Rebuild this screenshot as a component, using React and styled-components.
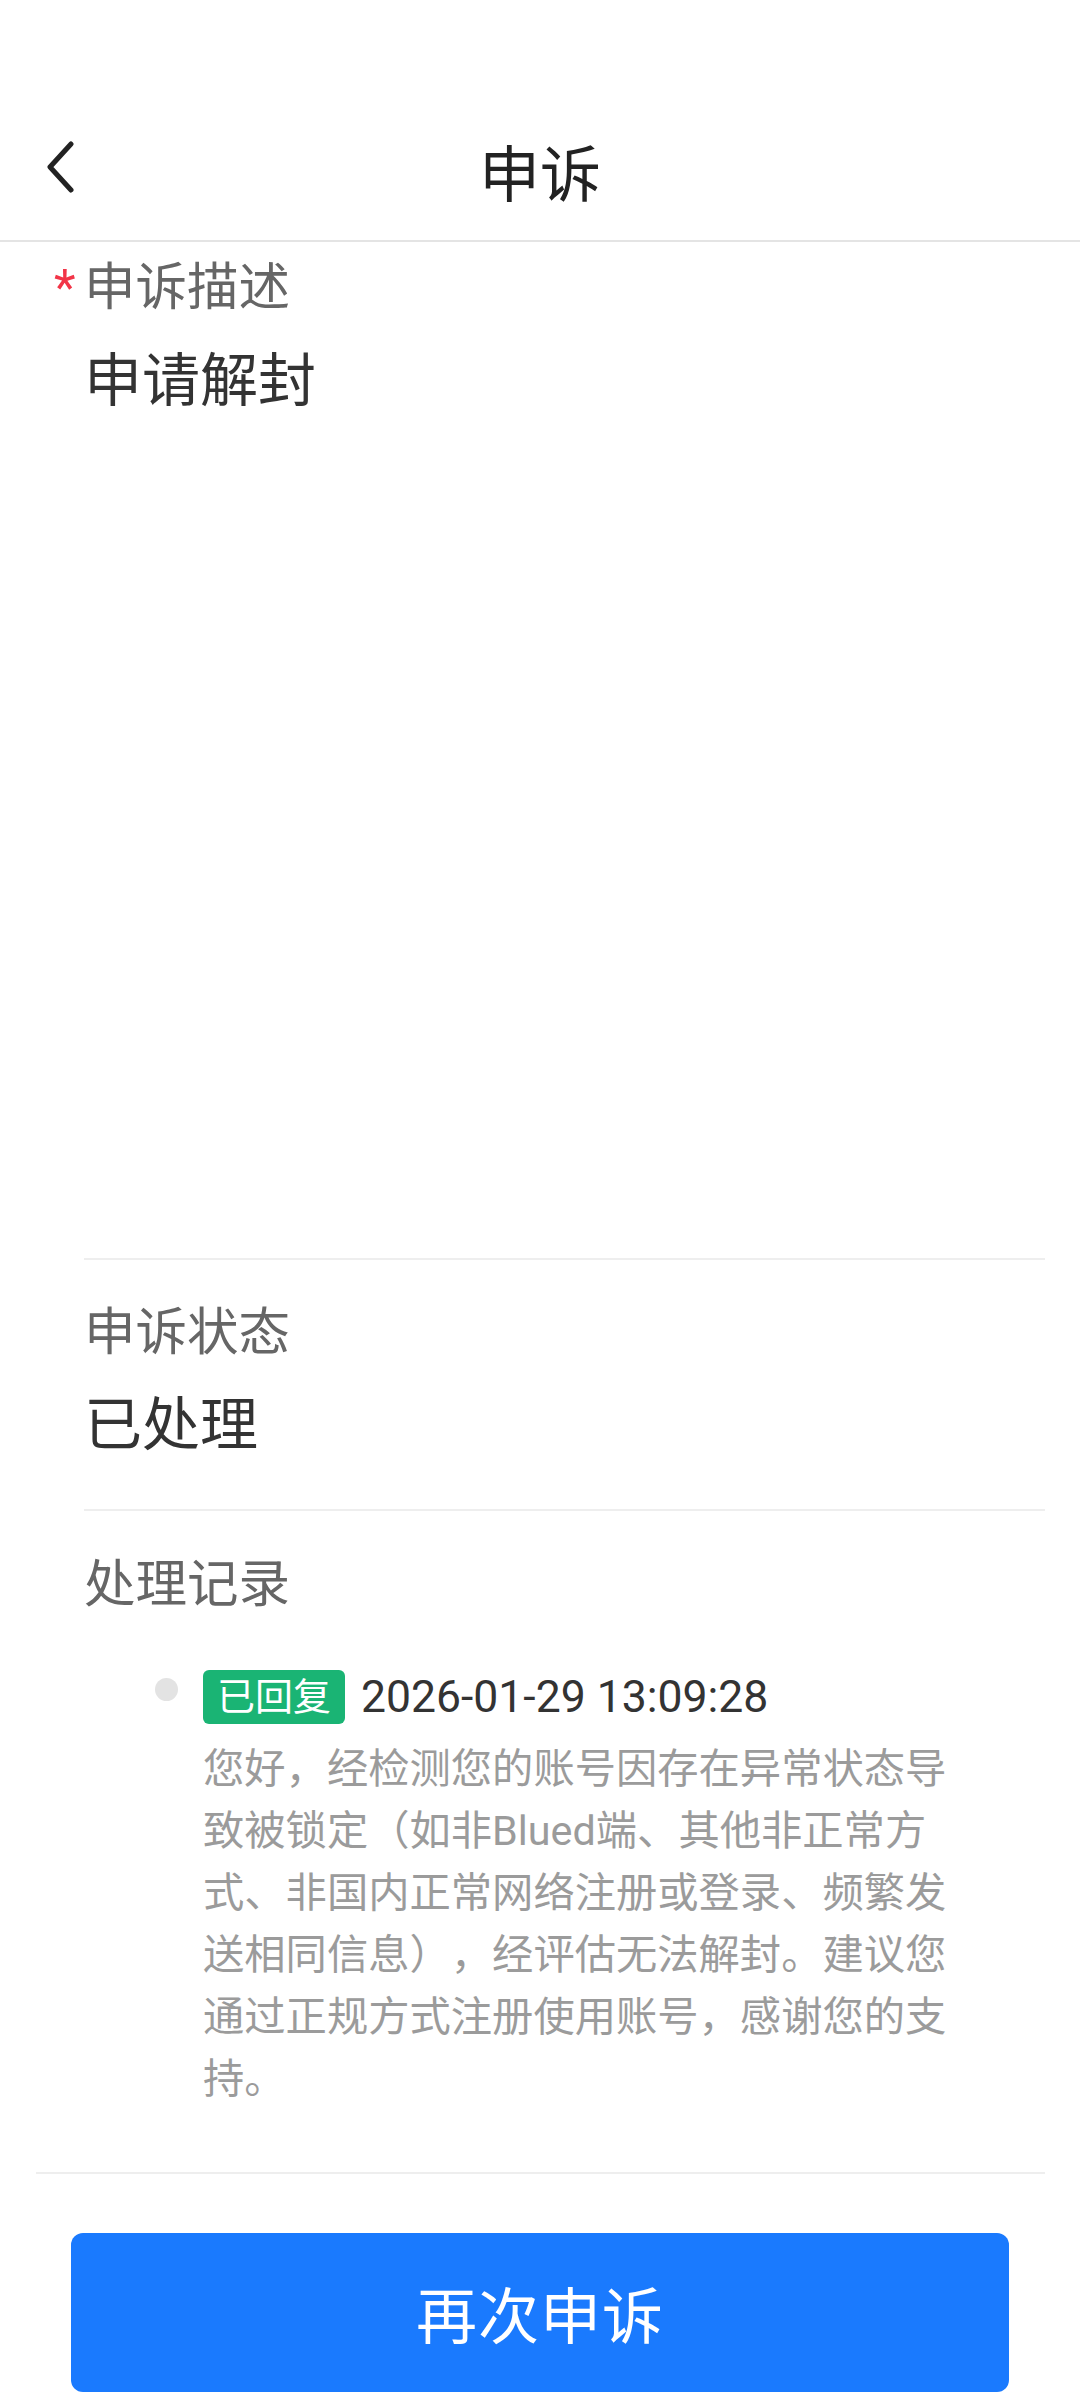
import React from 'react';
import styled, { createGlobalStyle } from 'styled-components';

const GlobalStyle = createGlobalStyle`
  html, body {
    margin: 0;
    padding: 0;
    background: #fff;
  }

  body {
    font-family: Roboto, "Noto Sans CJK SC", sans-serif;
    color: #333;
    text-spacing-trim: space-all;
  }

  *, *::after, *::before {
    box-sizing: border-box;
  }
`;

const Page = styled.div`
  width: 1080px;
  min-height: 2400px;
  display: flex;
  flex-direction: column;
  background: #fff;
`;

const NavBar = styled.header`
  height: 242px;
  padding-top: 112px;
  display: grid;
  grid-template-columns: 200px 1fr 200px;
  align-items: center;
  border-bottom: 2px solid #e4e4e4;
`;

const BackButton = styled.button`
  justify-self: start;
  margin: 0 0 18px 40px;
  padding: 0;
  width: 40px;
  height: 56px;
  border: none;
  background: none;
  display: flex;
  align-items: center;
  justify-content: center;
  color: #222;
`;

const Title = styled.h1`
  margin: 0;
  text-align: center;
  font-size: 61px;
  line-height: 80px;
  font-weight: 400;
  color: #222;
`;

const Field = styled.section`
  padding: 0 35px 0 84px;
`;

const FieldInner = styled.div`
  padding-top: ${p => p.$top}px;
  padding-bottom: ${p => p.$bottom}px;
  border-bottom: ${p => (p.$noLine ? 'none' : '2px solid #eeeeee')};
`;

const Label = styled.div`
  display: flex;
  align-items: center;
  font-size: 51.5px;
  line-height: 60px;
  color: #666;
`;

const Required = styled.span`
  width: 22px;
  margin: 0 8px 0 -30px;
  font-size: 50px;
  color: #f23548;
`;

const Value = styled.div`
  margin-top: ${p => p.$gap}px;
  min-height: ${p => p.$min || 0}px;
  font-size: 58px;
  line-height: 80px;
  color: #333;
`;

const Record = styled.div`
  margin-top: 55px;
  padding-left: 71px;
  display: grid;
  grid-template-columns: 24px 1fr;
  column-gap: 24px;
`;

const Dot = styled.span`
  width: 23px;
  height: 23px;
  margin-top: 8px;
  border-radius: 50%;
  background: #e3e3e3;
`;

const RecordHead = styled.div`
  display: flex;
  align-items: center;
  gap: 16px;
`;

const Badge = styled.span`
  height: 54px;
  padding: 0 14px;
  border-radius: 6px;
  background: #1ab474;
  color: #fff;
  font-size: 38px;
  line-height: 54px;
`;

const Time = styled.span`
  font-family: Roboto, sans-serif;
  font-size: 44.5px;
  line-height: 54px;
  color: #333;
`;

const Reply = styled.p`
  width: 752px;
  margin: 14px 0 0;
  font-size: 41.3px;
  line-height: 62px;
  color: #9b9b9b;
`;

const Divider = styled.hr`
  margin: 62px 35px 0 36px;
  border: none;
  border-top: 2px solid #eeeeee;
`;

const Footer = styled.div`
  padding: 59px 71px 8px;
`;

const PrimaryButton = styled.button`
  width: 100%;
  height: 159px;
  border: none;
  border-radius: 12px;
  background: #1a7afe;
  color: #fff;
  font-family: Roboto, "Noto Sans CJK SC", sans-serif;
  font-size: 61px;
  letter-spacing: 1px;
`;

const ChevronLeft = () => (
  <svg width="30" height="52" viewBox="0 0 30 52" fill="none">
    <path d="M26 3 L5 26 L26 49" stroke="currentColor" strokeWidth="5" strokeLinecap="round" strokeLinejoin="round" />
  </svg>
);

const reply = '您好，经检测您的账号因存在异常状态导致被锁定（如非Blued端、其他非正常方式、非国内正常网络注册或登录、频繁发送相同信息），经评估无法解封。建议您通过正规方式注册使用账号，感谢您的支持。';

const App = () => (
  <>
    <GlobalStyle />
    <Page>
      <NavBar>
        <BackButton aria-label="返回">
          <ChevronLeft />
        </BackButton>
        <Title>申诉</Title>
        <span />
      </NavBar>

      <Field>
        <FieldInner $top={16} $bottom={0}>
          <Label>
            <Required>*</Required>
            申诉描述
          </Label>
          <Value $gap={23} $min={917}>申请解封</Value>
        </FieldInner>
      </Field>

      <Field>
        <FieldInner $top={43} $bottom={44}>
          <Label>申诉状态</Label>
          <Value $gap={22}>已处理</Value>
        </FieldInner>
      </Field>

      <Field>
        <FieldInner $top={44} $bottom={0} $noLine>
          <Label>处理记录</Label>
          <Record>
            <Dot />
            <div>
              <RecordHead>
                <Badge>已回复</Badge>
                <Time>2026-01-29 13:09:28</Time>
              </RecordHead>
              <Reply>{reply}</Reply>
            </div>
          </Record>
        </FieldInner>
      </Field>

      <Divider />

      <Footer>
        <PrimaryButton>再次申诉</PrimaryButton>
      </Footer>
    </Page>
  </>
);

export default App;
